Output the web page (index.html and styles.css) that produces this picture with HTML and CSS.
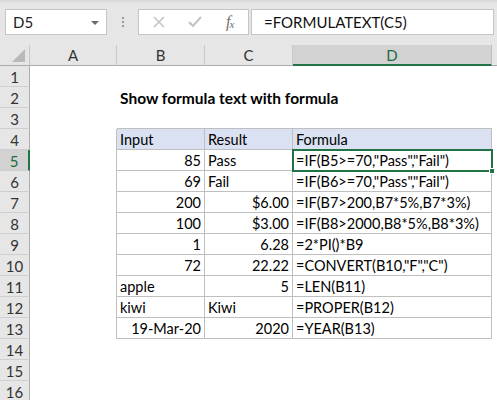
FILE: index.html
```html
<!DOCTYPE html>
<html>
<head>
<meta charset="utf-8">
<link rel="stylesheet" href="styles.css">
</head>
<body>
<div class="app">
  <div class="topbar">
    <div class="namebox"><span>D5</span><span class="caret"></span></div>
    <div class="dots"><i></i><i></i><i></i></div>
    <div class="fxbox">
      <svg class="ic" width="14" height="14" viewBox="0 0 14 14"><path d="M2 2L12 12M12 2L2 12" stroke="#c4c4c4" stroke-width="1.6" fill="none"/></svg>
      <svg class="ic" width="16" height="14" viewBox="0 0 16 14"><path d="M2 7L6 11L14 2" stroke="#c4c4c4" stroke-width="2" fill="none"/></svg>
      <span class="fx">f<sub>x</sub></span>
    </div>
    <div class="formula">=FORMULATEXT(C5)</div>
  </div>
  <div class="sheet">
    <div class="corner"><span class="tri"></span></div>
    <div class="ch">A</div><div class="ch">B</div><div class="ch">C</div><div class="ch sel">D</div><div class="ch rest"></div>

    <div class="rh">1</div><div></div><div></div><div></div><div></div><div></div>
    <div class="rh">2</div><div></div><div class="title">Show formula text with formula</div><div></div><div></div><div></div>
    <div class="rh">3</div><div></div><div class="tt"></div><div class="tt"></div><div class="tt"></div><div></div>

    <div class="rh">4</div><div class="tl"></div><div class="t hd">Input</div><div class="t hd">Result</div><div class="t hd">Formula</div><div></div>
    <div class="rh rsel">5</div><div class="tl"></div><div class="t r">85</div><div class="t">Pass</div><div class="t active">=IF(B5&gt;=70,"Pass","Fail")<span class="handle"></span></div><div></div>
    <div class="rh">6</div><div class="tl"></div><div class="t r">69</div><div class="t">Fail</div><div class="t">=IF(B6&gt;=70,"Pass","Fail")</div><div></div>
    <div class="rh">7</div><div class="tl"></div><div class="t r">200</div><div class="t r">$6.00</div><div class="t">=IF(B7&gt;200,B7*5%,B7*3%)</div><div></div>
    <div class="rh">8</div><div class="tl"></div><div class="t r">100</div><div class="t r">$3.00</div><div class="t">=IF(B8&gt;2000,B8*5%,B8*3%)</div><div></div>
    <div class="rh">9</div><div class="tl"></div><div class="t r">1</div><div class="t r">6.28</div><div class="t">=2*PI()*B9</div><div></div>
    <div class="rh">10</div><div class="tl"></div><div class="t r">72</div><div class="t r">22.22</div><div class="t">=CONVERT(B10,"F","C")</div><div></div>
    <div class="rh">11</div><div class="tl"></div><div class="t">apple</div><div class="t r">5</div><div class="t">=LEN(B11)</div><div></div>
    <div class="rh">12</div><div class="tl"></div><div class="t">kiwi</div><div class="t">Kiwi</div><div class="t">=PROPER(B12)</div><div></div>
    <div class="rh">13</div><div class="tl"></div><div class="t r">19-Mar-20</div><div class="t r">2020</div><div class="t">=YEAR(B13)</div><div></div>

    <div class="rh">14</div><div></div><div></div><div></div><div></div><div></div>
    <div class="rh">15</div><div></div><div></div><div></div><div></div><div></div>
    <div class="rh">16</div><div></div><div></div><div></div><div></div><div></div>
  </div>
</div>
</body>
</html>
```

FILE: styles.css
```css
* { box-sizing: border-box; }
html, body { margin: 0; padding: 0; background: #fff; }
body { font-family: Lato, "Liberation Sans", sans-serif; font-size: 14.5px; color: #000; }
.app { width: 497px; height: 400px; overflow: hidden; }

.topbar {
  height: 45px;
  background: #e6e6e6;
  border-top: 2px solid #dadada;
  display: flex;
  align-items: flex-start;
  padding-top: 7px;
  padding-left: 5px;
}
.namebox {
  width: 102px; height: 26px;
  background: #fff;
  border: 1px solid #c6c6c6;
  display: flex; align-items: center; justify-content: space-between;
  padding: 0 7px 0 7px;
  font-size: 15px; color: #222;
}
.caret {
  width: 0; height: 0;
  border-left: 4px solid transparent; border-right: 4px solid transparent;
  border-top: 4px solid #6a6a6a;
  margin-top: 1px;
}
.dots {
  width: 31px; height: 26px;
  display: flex; flex-direction: column; align-items: center; justify-content: center; gap: 2px;
}
.dots i { display: block; width: 2px; height: 2px; background: #9a9a9a; }
.fxbox {
  width: 111px; height: 26px;
  background: #fff;
  border: 1px solid #c6c6c6;
  display: flex; align-items: center;
  padding-left: 13px;
  gap: 21px;
}
.ic { display: block; }
.fx {
  font-family: "Liberation Serif", serif; font-style: italic; font-size: 16px; color: #707070;
  margin-left: 2px; letter-spacing: -1px;
}
.fx sub { font-size: 11px; vertical-align: -1px; }
.formula {
  margin-left: 2px;
  width: 243px; height: 26px;
  background: #fff;
  border: 1px solid #c6c6c6;
  padding-left: 12px;
  line-height: 24px;
  font-size: 15px; color: #111;
}

.sheet {
  display: grid;
  grid-template-columns: 30px 87px 88px 88px 199px 1fr;
  grid-auto-rows: 21px;
}
.sheet > div { position: relative; white-space: nowrap; line-height: 20px; padding: 1px 3px 0; }
.corner { background: #e6e6e6; border-right: 1px solid #c8c8c8; border-bottom: 1px solid #ababab; }
.tri {
  position: absolute; right: 4px; bottom: 3px;
  width: 0; height: 0;
  border-left: 13px solid transparent;
  border-bottom: 13px solid #b9b9b9;
}
.ch {
  background: #e6e6e6;
  border-bottom: 1px solid #ababab;
  border-right: 1px solid #c8c8c8;
  text-align: center; color: #333; font-size: 15px;
  line-height: 20px !important;
  padding-top: 0 !important;
}
.ch.sel { background: #d2d2d2; color: #1e6b41; border-bottom: 2px solid #217346; border-right-color: #bdbdbd; }
.ch.rest { border-right: none; }
.rh {
  background: #e6e6e6;
  border-right: 1px solid #ababab;
  border-bottom: 1px solid #cfcfcf;
  text-align: center; color: #333; font-size: 15px;
  line-height: 20px !important;
}
.rh.rsel { background: #d2d2d2; color: #1e6b41; border-right: 2px solid #217346; }

.title { font-weight: bold; font-size: 15.5px; overflow: visible; z-index: 1; }
.tt { border-bottom: 1px solid #bfbfbf; }
.tl { border-right: 1px solid #bfbfbf; }
.t { border-right: 1px solid #bfbfbf; border-bottom: 1px solid #bfbfbf; }
.hd { background: #d9e1f2; }
.r { text-align: right; }
.active { outline: 2px solid #217346; outline-offset: -1px; z-index: 2; }
.handle {
  position: absolute; right: -4px; bottom: -4px;
  width: 6px; height: 6px; background: #217346; border: 1px solid #fff;
}
```
